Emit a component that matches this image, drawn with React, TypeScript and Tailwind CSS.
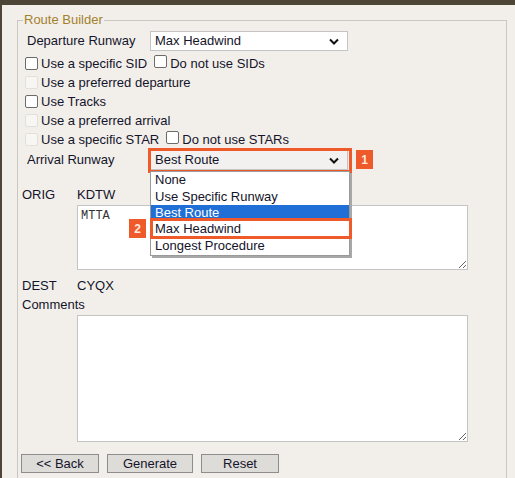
import React from "react";

function Box({ disabled = false }: { disabled?: boolean }) {
  return (
    <span
      className={
        "inline-block size-[13px] shrink-0 rounded-[2px] border " +
        (disabled ? "border-[#e2e0dc] bg-[#f7f6f3]" : "border-[#6b6b6b] bg-white")
      }
    />
  );
}

function Chevron() {
  return (
    <svg width="10" height="7" viewBox="0 0 10 7" className="shrink-0">
      <path d="M1 1.5 L5 5.5 L9 1.5" fill="none" stroke="#111" strokeWidth="2" />
    </svg>
  );
}

function Badge({ n }: { n: string }) {
  return (
    <span className="flex h-[19px] w-[17px] items-center justify-center bg-[#ef5a2a] text-[12px] font-bold text-[#ffe8dc]">
      {n}
    </span>
  );
}

const options = ["None", "Use Specific Runway", "Best Route", "Max Headwind", "Longest Procedure"];

export default function App() {
  return (
    <div
      className="relative h-[478px] w-[515px] overflow-hidden border-t-[5px] border-l-2 border-[#4d4535] bg-[#f2efea] text-[13px] leading-4 text-[#14142a]"
      style={{ fontFamily: '"Liberation Sans", Arial, sans-serif' }}
    >
      <fieldset className="ml-[15px] mt-[7px] h-[520px] w-[490px] border border-[#c9c7c3] pl-[4px] pr-2">
        <legend className="ml-[1px] px-[1px] text-[#a47f2e]">Route Builder</legend>

        <div className="mt-[3px] flex h-5 items-center pl-[5px]">
          <span className="w-[123px]">Departure Runway</span>
          <div className="flex h-5 w-[198px] items-center justify-between border border-[#c4c4c4] bg-white pl-[4px] pr-[8px]">
            <span>Max Headwind</span>
            <Chevron />
          </div>
        </div>

        <div className="mt-[3px] pl-[3px]">
          <div className="flex h-[19px] items-center gap-[3px]">
            <Box />
            <span>Use a specific SID</span>
            <span className="ml-[4px]"><Box /></span>
            <span>Do not use SIDs</span>
          </div>
          <div className="flex h-[19px] items-center gap-[3px]">
            <Box disabled />
            <span>Use a preferred departure</span>
          </div>
          <div className="flex h-[19px] items-center gap-[3px]">
            <Box />
            <span>Use Tracks</span>
          </div>
          <div className="flex h-[19px] items-center gap-[3px]">
            <Box disabled />
            <span>Use a preferred arrival</span>
          </div>
          <div className="flex h-[19px] items-center gap-[3px]">
            <Box disabled />
            <span>Use a specific STAR</span>
            <span className="ml-[4px]"><Box /></span>
            <span>Do not use STARs</span>
          </div>
        </div>

        <div className="relative mt-[1px] flex h-5 items-center pl-[5px]">
          <span className="w-[123px]">Arrival Runway</span>
          <div className="relative">
            <div className="flex h-5 w-[198px] items-center justify-between border border-[#c4c4c4] bg-[#f2f1ef] pl-[4px] pr-[8px]">
              <span>Best Route</span>
              <Chevron />
            </div>
            <div className="absolute -left-[2px] -top-[2px] h-[25px] w-[204px] border-[3px] border-[#ef5a2a]" />
            <div className="absolute left-[206px] top-0">
              <Badge n="1" />
            </div>

            <div className="absolute left-0 top-[21px] z-10 w-[200px] border border-[#9a9a9a] bg-white pb-[1px] shadow-[2px_2px_0_#a8a8a8]">
              {options.map((o) => (
                <div
                  key={o}
                  className={
                    "flex h-[16.4px] items-center pl-[4px] " +
                    (o === "Best Route" ? "bg-[#1f6fd6] text-white" : "")
                  }
                >
                  {o}
                </div>
              ))}
              <div className="absolute left-[-1px] top-[46px] h-[21px] w-[202px] border-[3px] border-[#ef5a2a]" />
              <div className="absolute left-[-22px] top-[47px]">
                <Badge n="2" />
              </div>
            </div>
          </div>
        </div>

        <div className="mt-[17px] flex h-4 items-center">
          <span className="w-[55px]">ORIG</span>
          <span>KDTW</span>
        </div>
        <textarea
          readOnly
          defaultValue="MTTA"
          className="ml-[55px] mt-[2px] block h-[65px] w-[391px] border border-[#c4c4c4] bg-white px-[3px] py-[2px] text-[12px] text-[#333]"
          style={{ fontFamily: '"Liberation Mono", monospace' }}
        />

        <div className="mt-[8px] flex h-4 items-center">
          <span className="w-[55px]">DEST</span>
          <span>CYQX</span>
        </div>
        <div className="mt-[3px] flex h-4 items-center">Comments</div>
        <textarea
          readOnly
          className="ml-[55px] mt-[2px] block h-[127px] w-[391px] border border-[#c4c4c4] bg-white"
        />

        <div className="-ml-[1px] mt-[12px] flex gap-2">
          <button className="h-[19px] w-[78px] border border-[#8d8d8d] bg-[#dedcd8]">&lt;&lt; Back</button>
          <button className="h-[19px] w-[86px] border border-[#8d8d8d] bg-[#dedcd8]">Generate</button>
          <button className="h-[19px] w-[78px] border border-[#8d8d8d] bg-[#dedcd8]">Reset</button>
        </div>
      </fieldset>
    </div>
  );
}
